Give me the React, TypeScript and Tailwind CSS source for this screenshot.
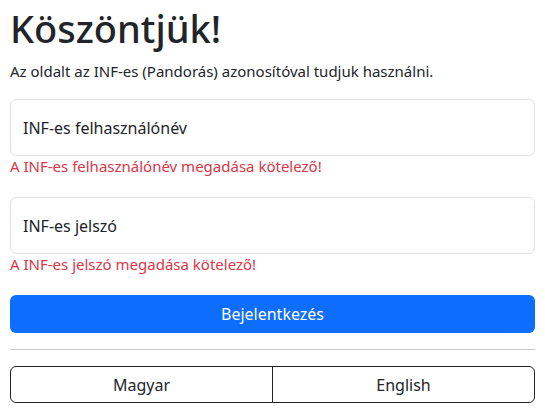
export default function App() {
  return (
    <div className="min-h-screen bg-white px-[10px] pt-[5px] text-[#212529]" style={{ fontFamily: '"Noto Sans", "Open Sans", sans-serif' }}>
      <h1 className="mb-2 text-[38px] font-medium leading-[46px]">Köszöntjük!</h1>
      <p className="mb-4 text-[15px] leading-6">Az oldalt az INF-es (Pandorás) azonosítóval tudjuk használni.</p>

      {/* Username */}
      <div className="mb-[21px]">
        <div className="flex h-[57px] items-center rounded-md border border-[#dee2e6] px-3 text-[16px]">
          INF-es felhasználónév
        </div>
        <div className="text-[15px] leading-5 text-[#dc3545]">A INF-es felhasználónév megadása kötelező!</div>
      </div>

      {/* Password */}
      <div className="mb-[21px]">
        <div className="flex h-[57px] items-center rounded-md border border-[#dee2e6] px-3 text-[16px]">
          INF-es jelszó
        </div>
        <div className="text-[15px] leading-5 text-[#dc3545]">A INF-es jelszó megadása kötelező!</div>
      </div>

      <button className="flex h-[38px] w-full items-center justify-center rounded-md bg-[#0d6efd] text-[16px] text-white">
        Bejelentkezés
      </button>

      <hr className="my-4 border-t border-[#c8c8c8]" />

      {/* Language switch */}
      <div className="flex h-[37px] w-full rounded-md border border-[#212529]">
        <button className="flex flex-1 items-center justify-center border-r border-[#212529] text-[16px]">Magyar</button>
        <button className="flex flex-1 items-center justify-center text-[16px]">English</button>
      </div>
    </div>
  )
}
